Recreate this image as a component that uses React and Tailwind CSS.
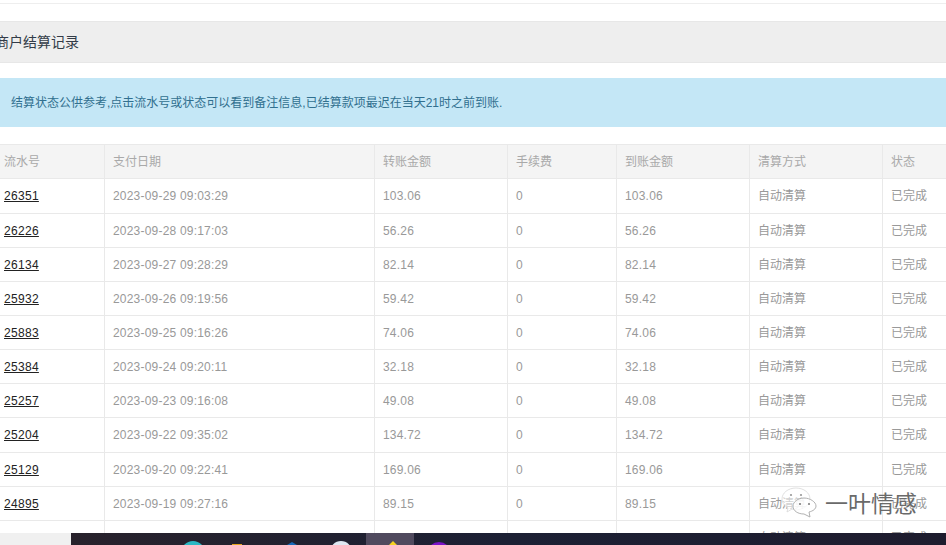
const rows = [
  ['26351', '2023-09-29 09:03:29', '103.06', 'h-[35px]'],
  ['26226', '2023-09-28 09:17:03', '56.26', 'h-[34px]'],
  ['26134', '2023-09-27 09:28:29', '82.14', 'h-[34px]'],
  ['25932', '2023-09-26 09:19:56', '59.42', 'h-[34px]'],
  ['25883', '2023-09-25 09:16:26', '74.06', 'h-[34px]'],
  ['25384', '2023-09-24 09:20:11', '32.18', 'h-[34px]'],
  ['25257', '2023-09-23 09:16:08', '49.08', 'h-[34px]'],
  ['25204', '2023-09-22 09:35:02', '134.72', 'h-[35px]'],
  ['25129', '2023-09-20 09:22:41', '169.06', 'h-[34px]'],
  ['24895', '2023-09-19 09:27:16', '89.15', 'h-[34px]'],
  ['24871', '2023-09-18 09:30:14', '1029.13', 'h-[34px]'],
];

const headers = ['流水号', '支付日期', '转账金额', '手续费', '到账金额', '清算方式', '状态'];

function Taskbar() {
  return (
    <div className="absolute bottom-0 left-0 right-0 flex h-[12px] overflow-hidden">
      <div className="w-[71px] bg-[#f0f0f0]" />
      <div className="relative flex-1 bg-gradient-to-r from-[#28222c] via-[#1c2034] to-[#1e1c2e]">
        <div className="absolute left-[295px] top-0 h-[12px] w-[48px] bg-[#504a5e]" />
        <div className="absolute left-[110px] top-[8px] h-[24px] w-[24px] rounded-full bg-[#2bb8c4]" />
        <div className="absolute left-[161px] top-[11px] h-[10px] w-[10px] bg-[#e5a51e]" />
        <svg className="absolute left-[210px] top-0" width="22" height="12" viewBox="0 0 22 12">
          <path d="M11 9 L16 12 L6 12 Z" fill="#1668b8" />
        </svg>
        <div className="absolute left-[259px] top-[8px] h-[22px] w-[22px] rounded-full bg-[#dfe8f2]" />
        <svg className="absolute left-[312px] top-0" width="20" height="12" viewBox="0 0 20 12">
          <path d="M10 8 L14 12 L6 12 Z" fill="#f4d21f" />
        </svg>
        <div className="absolute left-[356px] top-[9px] h-[24px] w-[24px] rounded-full bg-[#7a12c8]" />
      </div>
    </div>
  );
}

function Watermark() {
  return (
    <div className="absolute left-[781px] top-[487px] flex items-center">
      <svg width="36" height="31" viewBox="0 0 36 31" fill="none">
        <path d="M15 1 C7 1 1 6 1 12 C1 16 3 18 7 21 L6 25 L11 22 C12 22 13 23 14 23 C22 23 29 18 29 12 C29 6 23 1 15 1 Z" fill="rgba(255,255,255,0.55)" stroke="#d8d8d8" strokeWidth="0.8" />
        <path d="M23 11 C17 11 12 15 12 19 C12 24 17 27 23 27 L29 30 L28 25 C32 24 35 22 35 19 C35 15 29 11 23 11 Z" fill="rgba(255,255,255,0.75)" stroke="#a8a8a8" strokeWidth="0.9" />
        <circle cx="10" cy="8" r="1.1" fill="#999" />
        <circle cx="20" cy="8" r="1.1" fill="#999" />
        <circle cx="19" cy="17" r="1" fill="#777" />
        <circle cx="28" cy="17" r="1" fill="#777" />
      </svg>
      <span className="ml-[8px] font-['Noto_Sans_CJK_SC',sans-serif] text-[23px] leading-none text-[#6a6a6a] [text-shadow:0_0_1px_#fff]">一叶情感</span>
    </div>
  );
}

export default function App() {
  return (
    <div className="relative h-[545px] w-[946px] overflow-hidden bg-white font-['Liberation_Sans','Noto_Sans_CJK_SC',sans-serif]">
      <div className="pt-[3px]">
        <div className="h-px bg-[#eeeeee]" />
        <div className="mt-[17px] flex h-[42px] items-center border-y border-[#e7e7e7] bg-[#eeeeee] -ml-[5px]">
          <h2 className="text-[14px] font-normal text-[#333c48]">商户结算记录</h2>
        </div>
        <div className="mt-[15px] flex h-[49px] items-center bg-[#c4e7f6] pl-[11px] text-[12px] text-[#31708f]">
          结算状态公供参考,点击流水号或状态可以看到备注信息,已结算款项最迟在当天21时之前到账.
        </div>
        <table className="mt-[17px] -ml-[5px] w-[961px] table-fixed border-collapse text-[12px]">
          <colgroup>
            <col className="w-[109px]" />
            <col className="w-[270px]" />
            <col className="w-[133px]" />
            <col className="w-[109px]" />
            <col className="w-[133px]" />
            <col className="w-[133px]" />
            <col className="w-[74px]" />
          </colgroup>
          <thead>
            <tr className="h-[34px] bg-[#f4f4f4]">
              {headers.map(h => (
                <th key={h} className="border border-[#e9e9e9] pl-[8px] text-left font-normal text-[#a9a9a9]">{h}</th>
              ))}
            </tr>
          </thead>
          <tbody className="text-[#999999]">
            {rows.map(r => (
              <tr key={r[0]} className={r[3]}>
                <td className="border border-[#e9e9e9] pl-[8px]">
                  <a href="#" className="tracking-[0.3px] text-[#222] underline">{r[0]}</a>
                </td>
                <td className="border border-[#e9e9e9] pl-[8px] tracking-[0.2px]">{r[1]}</td>
                <td className="border border-[#e9e9e9] pl-[8px] tracking-[0.2px]">{r[2]}</td>
                <td className="border border-[#e9e9e9] pl-[8px]">0</td>
                <td className="border border-[#e9e9e9] pl-[8px] tracking-[0.2px]">{r[2]}</td>
                <td className="border border-[#e9e9e9] pl-[8px]">自动清算</td>
                <td className="border border-[#e9e9e9] pl-[8px]">已完成</td>
              </tr>
            ))}
          </tbody>
        </table>
      </div>
      <Watermark />
      <Taskbar />
    </div>
  );
}
